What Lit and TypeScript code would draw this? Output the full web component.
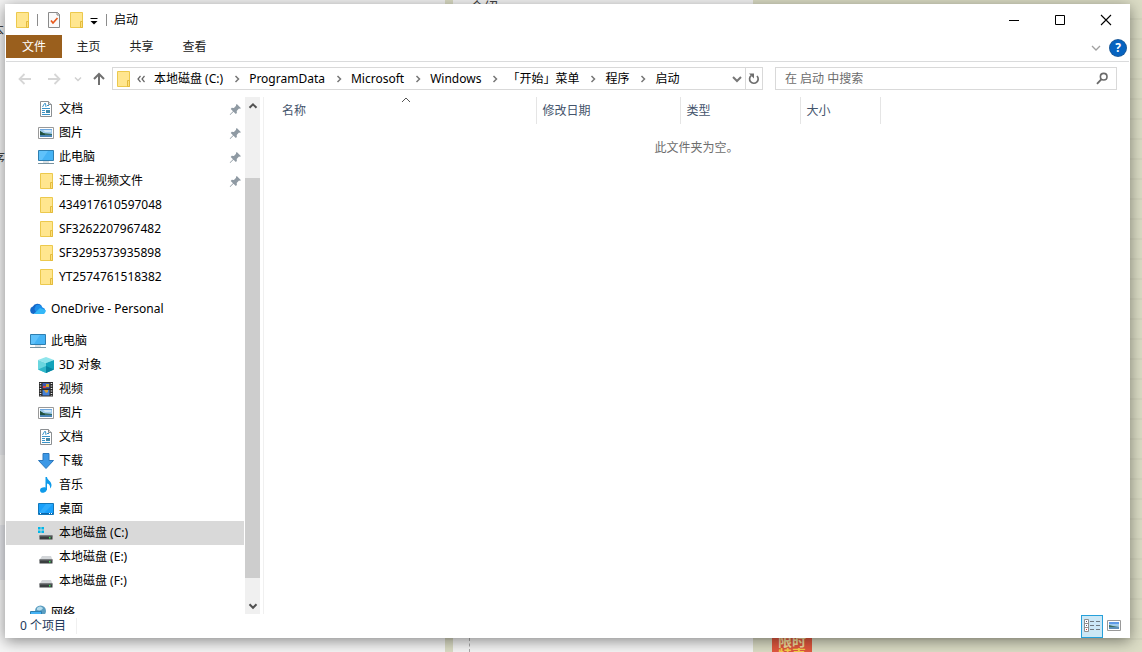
import { LitElement, html, svg, css, nothing } from "lit";
import { customElement, property, state } from "lit/decorators.js";
import { classMap } from "lit/directives/class-map.js";

type NavItem = { id: string; label: string; icon: string; pinned?: boolean; root?: boolean };

const NAV_GROUPS: NavItem[][] = [
  [
    { id: "q-docs", label: "文档", icon: "doc", pinned: true },
    { id: "q-pics", label: "图片", icon: "picture", pinned: true },
    { id: "q-pc", label: "此电脑", icon: "pc", pinned: true },
    { id: "q-hbs", label: "汇博士视频文件", icon: "folder", pinned: true },
    { id: "q-1", label: "434917610597048", icon: "folder" },
    { id: "q-2", label: "SF3262207967482", icon: "folder" },
    { id: "q-3", label: "SF3295373935898", icon: "folder" },
    { id: "q-4", label: "YT2574761518382", icon: "folder" },
  ],
  [{ id: "onedrive", label: "OneDrive - Personal", icon: "cloud", root: true }],
  [
    { id: "pc", label: "此电脑", icon: "pc", root: true },
    { id: "3d", label: "3D 对象", icon: "cube" },
    { id: "video", label: "视频", icon: "film" },
    { id: "pics", label: "图片", icon: "picture" },
    { id: "docs", label: "文档", icon: "doc" },
    { id: "down", label: "下载", icon: "download" },
    { id: "music", label: "音乐", icon: "music" },
    { id: "desk", label: "桌面", icon: "desktop" },
    { id: "c", label: "本地磁盘 (C:)", icon: "windrive" },
    { id: "e", label: "本地磁盘 (E:)", icon: "drive" },
    { id: "f", label: "本地磁盘 (F:)", icon: "drive" },
  ],
  [{ id: "net", label: "网络", icon: "network", root: true }],
];

const CRUMBS = ["本地磁盘 (C:)", "ProgramData", "Microsoft", "Windows", "「开始」菜单", "程序", "启动"];

const driveBody = svg`
  <path d="M4 7h9l1.500 4h-13z" fill="#d3d6d9"/>
  <path d="M1.500 10.500h13v4h-13z" fill="#3b3e40"/>
  <path d="M1.500 10.500h13v1h-13z" fill="#6b6e70"/>
  <path d="M11 12h1.500v1.500H11z" fill="#3fe05a"/>`;

const ICONS: Record<string, unknown> = {
  folder: svg`
    <path d="M2.500.5h12v15h-12z" fill="#ffe68f" stroke="#ecc94d"/>
    <path d="M12.500 9.500h2v6h-2z" fill="#ffe07a" stroke="#e3bb3d"/>`,
  doc: svg`
    <path d="M2.500.5h8l3 3v12h-11z" fill="#fff" stroke="#8b8f92"/>
    <path d="M10.500.5v3h3" fill="#dcdfe0" stroke="#8b8f92"/>
    <path d="M4.500 6l2-3.500h1L8 6M9 4.500h2M4 7.500h8M4 9.500h3M4 11.500h3M4 13.500h8" fill="none" stroke="#3a94c9"/>
    <path d="M8 9h4v3H8z" fill="#4389a9"/>`,
  picture: svg`
    <path d="M.5 2.500h15v11H.5z" fill="#fff" stroke="#999"/>
    <path d="M2 4h12v8H2z" fill="#9fcbed"/>
    <path d="M2 4h12v1H2z" fill="#6fa8e0"/>
    <path d="M5 5h8v2H7z" fill="#cfe6f5"/>
    <path d="M2 10h12v2H2z" fill="#4a84b5"/>
    <path d="M2 6l3 2 9 1v1H2z" fill="#3d6e5c"/>
    <path d="M2 6l5 3v1H2z" fill="#20503f"/>`,
  pc: svg`
    <path d="M.5 1.500h15v10H.5z" fill="#45b3f5" stroke="#2f7fb0"/>
    <path d="M1 2h9L4 11H1z" fill="#72ccff" opacity=".6"/>
    <path d="M5 13h6" stroke="#b5c2ca"/>
    <path d="M0 14.500h16" stroke="#76919f"/>`,
  cloud: svg`
    <path d="M3.800 13A3.800 3.800 0 0 1 2.800 5.600 5.200 5.200 0 0 1 11.800 5L8 11z" fill="#1568c9"/>
    <path d="M6 4.200A5 5 0 0 1 12.600 6.600 3.300 3.300 0 0 1 13 13H7L4.400 8z" fill="#1c8eea"/>
    <path d="M3.800 13h8.900A3.200 3.200 0 0 0 15.700 9.200L10 7z" fill="#34b8f8"/>`,
  cube: svg`
    <path d="M8 0l8 3-8 3-8-3z" fill="#8fe5ec"/>
    <path d="M0 3l8 3v10l-8-3.500z" fill="#6ad6df"/>
    <path d="M8 6l8-3v9.500L8 16z" fill="#12a3bb"/>
    <path d="M0 12.500l8-3.500v7z" fill="#2fb6c8"/>
    <path d="M8 9l8 3.500L8 16z" fill="#0786a3"/>`,
  film: svg`
    <path d="M1 1h14v14.500H1z" fill="#2b2b2b"/>
    <path d="M4.500 2h7v5.500h-7z" fill="#3d59b0"/>
    <path d="M4.500 9h7v5.500h-7z" fill="#4581d8"/>
    <path d="M5 5h3v2H5z" fill="#d84545"/><path d="M8 3h3v3H8z" fill="#c9a52b"/>
    <path d="M6 9h4v2l-2 1z" fill="#d8a13a"/>
    <path d="M2.500 2v13M13.500 2v13" stroke="#e8e8e8" stroke-width="1.500" stroke-dasharray="1 1.500"/>`,
  download: svg`<path d="M5 .5h6v7h4.500L8 15.500.5 7.500H5z" fill="#3c98e6" stroke="#2c78bd"/>`,
  music: svg`
    <path d="M7.500 0h1.500c0 3 4.500 4 4.500 8 0 1.500-.6 2.500-1.500 3.500.5-3-.8-4.500-3-5V13H7.500z" fill="#0f9bea"/>
    <path d="M2 13.200C2 11 5 10 7.500 10.500 9.800 11 9 15 5.500 15.800 3.500 16 2 15 2 13.200z" fill="#0f9bea"/>`,
  desktop: svg`
    <path d="M.5 2.500h15v11H.5z" fill="#18a0fb" stroke="#1277b9"/>
    <path d="M8 3h7L6 12H1z" fill="#3db4ff" opacity=".6"/>
    <path d="M1 12.500h14" stroke="#0b65a8"/>
    <path d="M2 12.500h1M11 12.500h1M13 12.500h1" stroke="#fff"/>`,
  drive: driveBody,
  windrive: svg`${driveBody}
    <path d="M0 2h6v6H0z" fill="#d9d9d9"/>
    <path d="M0 2h2.600v2.600H0zM3.400 2H6v2.600H3.400zM0 5.400h2.600V8H0zM3.400 5.400H6V8H3.400z" fill="#00b7ea"/>`,
  network: svg`
    <circle cx="10.500" cy="6" r="5.500" fill="#5b9dc0"/>
    <path d="M7 3c2-2 4-2 6 0-1 2-3 3-6 2z" fill="#b6dcec"/>
    <path d="M.5 6.500h11v7H.5z" fill="#45b3f5" stroke="#2f7fb0"/>`,
  pin: svg`<path d="M9.800 3l4.200 4.200-1.300.6-.7-.2-2.300 2.300.2 2-1.100 1.100-2.300-2.300L3.200 14l-.5-.5 3.300-3.300-2.300-2.300 1.100-1.100 2.100.2 2.200-2.300-.2-.7z" fill="#8f9aa3"/>`,
  check: svg`
    <path d="M2.500.5h9l2 2v13h-11z" fill="#fafafa" stroke="#8a8a8a"/>
    <path d="M11 0v3h3" fill="none" stroke="#8a8a8a"/>
    <path d="M5 8.500l2 2.500 4.500-5" fill="none" stroke="#e8591c" stroke-width="1.700"/>`,
  dropbar: svg`<path d="M4.500 6.500h7" stroke="#000"/><path d="M4.500 9h7L8 12.500z" fill="#000"/>`,
  back: svg`<path d="M14 8H3M7.500 3L2.500 8l5 5" fill="none" stroke="#d6d6d6" stroke-width="1.800"/>`,
  forward: svg`<path d="M2 8h11M8.500 3l5 5-5 5" fill="none" stroke="#d6d6d6" stroke-width="1.800"/>`,
  recent: svg`<path d="M5 6.500l3 3 3-3" fill="none" stroke="#d0d0d0" stroke-width="1.500"/>`,
  up: svg`<path d="M8 14V3M3 8l5-5 5 5" fill="none" stroke="#707070" stroke-width="2"/>`,
  crumb: svg`<path d="M6.500 5l3 3-3 3" fill="none" stroke="#777" stroke-width="1.500"/>`,
  laquo: svg`<path d="M7.500 5L5 8l2.500 3M11.500 5L9 8l2.500 3" fill="none" stroke="#666" stroke-width="1.200"/>`,
  down: svg`<path d="M4 6l4 4 4-4" fill="none" stroke="#777" stroke-width="2"/>`,
  refresh: svg`<path d="M5.200 4.600A4.300 4.300 0 1 0 11 5" fill="none" stroke="#6e6e6e" stroke-width="1.700"/><path d="M3 2.500h5v5z" fill="#6e6e6e"/>`,
  search: svg`<circle cx="9.700" cy="5.700" r="3.300" fill="none" stroke="#6a6a6a" stroke-width="1.600"/><path d="M7.500 8.200L3 12.800" stroke="#6a6a6a" stroke-width="1.900"/>`,
  expand: svg`<path d="M4 6l4 4 4-4" fill="none" stroke="#a0a0a0" stroke-width="1.300"/>`,
  sort: svg`<path d="M4 10l4-4 4 4" fill="none" stroke="#555"/>`,
  scrollup: svg`<path d="M4.500 9.800L8 6.300l3.500 3.500" fill="none" stroke="#505050" stroke-width="2"/>`,
  scrolldown: svg`<path d="M4.500 6.300L8 9.800l3.500-3.500" fill="none" stroke="#505050" stroke-width="2"/>`,
  min: svg`<path d="M3 8.500h10" stroke="#000"/>`,
  max: svg`<path d="M3.500 3.500h9v9h-9z" fill="none" stroke="#000"/>`,
  close: svg`<path d="M3 3l10 10M13 3L3 13" stroke="#000" stroke-width="1.100"/>`,
  details: svg`
    <path d="M.5 1.500h4v12h-4zM.5 5.500h4M.5 9.500h4" fill="#fff" stroke="#8f8f8f"/>
    <path d="M2 3h1v1H2zM2 7h1v1H2z" fill="#557"/><path d="M2 11h1v1H2z" fill="#c33"/>
    <path d="M6 3.500h4M12 3.500h4M6 7.500h4M12 7.500h4M6 11.500h4M12 11.500h4" stroke="#707a80"/>`,
  large: svg`
    <path d="M1.500 2.500h13v10h-13z" fill="#fff" stroke="#999"/>
    <path d="M3 4h10v7H3z" fill="#9fcbed"/>
    <path d="M3 4h10v2H3z" fill="#5f9be8"/>
    <path d="M3 9h10v2H3z" fill="#5d8fb8"/>
    <path d="M3 7l4 1 6 1H3z" fill="#3d6e5c"/>`,
};

@customElement("x-icon")
class XIcon extends LitElement {
  @property() name = "";
  static styles = css`
    :host { display: block; flex: none; width: 16px; height: 16px; }
    svg { display: block; width: 16px; height: 16px; }
  `;
  render() {
    return html`<svg viewBox="0 0 16 16" aria-hidden="true">${ICONS[this.name]}</svg>`;
  }
}

@customElement("app-root")
class AppRoot extends LitElement {
  @state() private selected = "c";
  @state() private view = "details";

  static styles = css`
    :host {
      display: grid;
      height: 100vh;
      overflow: hidden;
      font: 12px/16px "Noto Sans", "Noto Sans CJK SC", sans-serif;
      color: #000;
    }
    * { box-sizing: border-box; }
    button, input { font: inherit; color: inherit; border: 0; margin: 0; padding: 0; background: none; border-radius: 0; }
    a { color: inherit; text-decoration: none; }
    ul, ol { list-style: none; margin: 0; padding: 0; }

    .backdrop {
      grid-area: 1 / 1;
      display: grid;
      grid-template-columns: 445px 300px 1fr;
      column-gap: 8px;
      min-height: 0;
      overflow: hidden;
      background: repeating-linear-gradient(#dcddc6 0 18px, #d5d6bf 18px 20px), #dcddc6;
    }
    .page { position: relative; background: #f6f6f6; color: #444; font-size: 14px; line-height: 18px; overflow: hidden; }
    .page.left { background: linear-gradient(#f4f4f4 370px, #e8e9ec 370px 455px, #f4f4f4 455px 525px, #e6e7ec 525px 580px, #f6f6f6 580px); }
    .frag { position: absolute; white-space: nowrap; }
    .frag.one { left: -10px; top: 21px; }
    .frag.two { left: -9px; top: 149px; }
    .frag.three { left: 17px; top: -2px; }
    .guide { position: absolute; left: 16px; bottom: 0; height: 14px; border-left: 1px dashed #aaa; }
    .side { position: relative; }
    .badge {
      position: absolute; left: 11px; bottom: -10px; width: 40px;
      display: grid; grid-auto-rows: 14px; justify-items: center;
      background: #e2583f; color: #f3dfa0;
      font-size: 14px; line-height: 14px; font-weight: 700;
    }
    .badge .gold { color: #f8cf4a; }

    .window {
      grid-area: 1 / 1;
      z-index: 1;
      margin: 4px 12px 14px 5px;
      padding: 0 1px;
      min-height: 0;
      display: flex;
      flex-direction: column;
      background: #fff;
      box-shadow: 0 3px 14px rgba(0, 0, 0, 0.45);
    }

    .titlebar { display: flex; align-items: center; height: 31px; flex: none; padding-left: 8px; }
    .titlebar h1 { font: inherit; margin: 0 0 0 7px; flex: 1; }
    .rule { width: 1px; height: 12px; background: #8c8c8c; }
    .quick { display: flex; align-items: center; gap: 6px; margin-left: 7px; }
    .quick .rule { margin-right: 2px; }
    .quick .drop { margin: 0 4px 0 -4px; }
    .caption { display: flex; align-self: stretch; }
    .caption button { width: 46px; display: grid; place-items: center; }

    .ribbon { display: flex; align-items: center; height: 27px; flex: none; border-bottom: 1px solid #dadbdc; padding-right: 3px; }
    .ribbon .tabs { display: flex; flex: 1; align-self: flex-start; }
    .ribbon .tabs button { width: 53px; height: 23px; padding-top: 1px; color: #222; }
    .ribbon .tabs .file { width: 56px; background: #9a5f1d; color: #fff; }
    .help { width: 16px; height: 16px; border-radius: 8px; background: #0663c0; color: #fff; font-weight: 700; margin-left: 6px; box-shadow: 0 0 0 1px #1b5a9a; }

    .toolbar { display: flex; align-items: center; height: 35px; flex: none; padding: 0 12px 2px 0; }
    .history { display: flex; align-items: center; width: 106px; padding-left: 11px; }
    .history .fwd { margin-left: 13px; }
    .history .recent { margin-left: 8px; }
    .history .up { margin-left: 5px; }
    .address { flex: 1; display: flex; align-items: center; height: 23px; border: 1px solid #d9d9d9; padding-left: 2px; min-width: 0; }
    .crumbs { display: flex; align-items: center; flex: 1; white-space: nowrap; min-width: 0; overflow: hidden; }
    .crumbs li { display: flex; align-items: center; }
    .crumbs .arrow { margin: 0 4px 0 6px; }
    .crumbs li:first-child .arrow { margin: 0 5px 0 2px; }
    .refresh { height: 21px; width: 17px; border-left: 1px solid #d9d9d9; display: grid; place-items: center; }
    .searchbox { display: flex; align-items: center; width: 342px; height: 23px; margin-left: 12px; border: 1px solid #d9d9d9; padding: 0 6px 0 9px; }
    .searchbox input { flex: 1; min-width: 0; outline: 0; }
    .searchbox input::placeholder { color: #6d6d6d; opacity: 1; }

    .body { flex: 1; display: flex; min-height: 0; }
    .nav { width: 238px; flex: none; overflow: hidden; }
    .nav ul { margin-bottom: 8px; }
    .nav a { display: flex; align-items: center; height: 24px; gap: 5px; padding: 0 1px 0 32px; white-space: nowrap; }
    .nav a.root { padding-left: 24px; }
    .nav a.on { background: #d9d9d9; }
    .nav .label { flex: 1; }
    .scroll { width: 17px; flex: none; display: flex; flex-direction: column; align-items: center; background: #f0f0f0; margin-right: 2px; border-left: 1px solid #fff; border-right: 1px solid #fff; }
    .scroll button { height: 17px; }
    .track { flex: 1; align-self: stretch; display: grid; grid-template-rows: 64fr 400fr 19fr; }
    .thumb { grid-row: 2; background: #cdcdcd; }

    .list { flex: 1; border-left: 1px solid #f0f0f0; min-width: 0; position: relative; }
    table { border-collapse: collapse; table-layout: fixed; width: 616px; color: #44546c; }
    th { height: 27px; padding: 0 0 0 6px; font-weight: 400; text-align: left; border-right: 1px solid #e5e5e5; }
    th.name { width: 272px; padding-left: 18px; }
    th.date { width: 144px; }
    th.type { width: 120px; }
    th.size { width: 80px; }
    .sort { position: absolute; left: 134px; top: -5px; }
    .empty { margin: 16px 0 0; text-align: center; color: #6d6d6d; }

    .status { display: flex; align-items: center; height: 24px; flex: none; padding: 0 4px 0 14px; color: #1e395b; }
    .status .count { padding-right: 10px; border-right: 1px solid #f0f0f0; margin-right: auto; }
    .status button { width: 22px; height: 23px; display: grid; place-items: center; border: 1px solid transparent; }
    .status button.on { background: #cce8f6; border-color: #26a0da; }
  `;

  private renderItem(item: NavItem) {
    return html`<li>
      <a href="#${item.id}" class=${classMap({ root: !!item.root, on: this.selected === item.id })}
        @click=${(e: Event) => { e.preventDefault(); this.selected = item.id; }}>
        <x-icon name=${item.icon}></x-icon><span class="label">${item.label}</span>
        ${item.pinned ? html`<x-icon name="pin"></x-icon>` : nothing}
      </a>
    </li>`;
  }

  render() {
    return html`
      <div class="backdrop" aria-hidden="true">
        <div class="page left"><span class="frag one">本</span><span class="frag two">序</span></div>
        <div class="page"><span class="frag three">介绍</span><i class="guide"></i></div>
        <div class="side"><div class="badge"><span>限时</span><span class="gold">特惠</span></div></div>
      </div>
      <main class="window">
        <header class="titlebar">
          <x-icon name="folder"></x-icon>
          <div class="quick">
            <i class="rule"></i>
            <button aria-label="属性"><x-icon name="check"></x-icon></button>
            <button aria-label="新建文件夹"><x-icon name="folder"></x-icon></button>
            <button class="drop" aria-label="自定义快速访问工具栏"><x-icon name="dropbar"></x-icon></button>
          </div>
          <i class="rule"></i>
          <h1>启动</h1>
          <div class="caption">
            <button aria-label="最小化"><x-icon name="min"></x-icon></button>
            <button aria-label="最大化"><x-icon name="max"></x-icon></button>
            <button aria-label="关闭"><x-icon name="close"></x-icon></button>
          </div>
        </header>
        <div class="ribbon">
          <div class="tabs">
            <button class="file">文件</button><button>主页</button><button>共享</button><button>查看</button>
          </div>
          <button aria-label="展开功能区"><x-icon name="expand"></x-icon></button>
          <button class="help" aria-label="帮助">?</button>
        </div>
        <div class="toolbar">
          <div class="history">
            <button aria-label="后退"><x-icon name="back"></x-icon></button>
            <button class="fwd" aria-label="前进"><x-icon name="forward"></x-icon></button>
            <button class="recent" aria-label="最近位置"><x-icon name="recent"></x-icon></button>
            <button class="up" aria-label="上移"><x-icon name="up"></x-icon></button>
          </div>
          <div class="address">
            <x-icon name="folder"></x-icon>
            <ol class="crumbs">
              ${CRUMBS.map((c, i) => html`<li>
                <x-icon class="arrow" name=${i ? "crumb" : "laquo"}></x-icon><a href="#">${c}</a>
              </li>`)}
            </ol>
            <button aria-label="以前的位置"><x-icon name="down"></x-icon></button>
            <button class="refresh" aria-label="刷新"><x-icon name="refresh"></x-icon></button>
          </div>
          <label class="searchbox">
            <input type="text" aria-label="搜索" placeholder="在 启动 中搜索" />
            <x-icon name="search"></x-icon>
          </label>
        </div>
        <div class="body">
          <nav class="nav">${NAV_GROUPS.map((g) => html`<ul>${g.map((i) => this.renderItem(i))}</ul>`)}</nav>
          <div class="scroll">
            <button aria-label="向上滚动"><x-icon name="scrollup"></x-icon></button>
            <div class="track"><div class="thumb"></div></div>
            <button aria-label="向下滚动"><x-icon name="scrolldown"></x-icon></button>
          </div>
          <section class="list">
            <x-icon class="sort" name="sort"></x-icon>
            <table>
              <thead><tr>
                <th class="name">名称</th><th class="date">修改日期</th><th class="type">类型</th><th class="size">大小</th>
              </tr></thead>
            </table>
            <p class="empty">此文件夹为空。</p>
          </section>
        </div>
        <footer class="status">
          <span class="count">0 个项目</span>
          <button class=${classMap({ on: this.view === "details" })} aria-label="详细信息" @click=${() => (this.view = "details")}><x-icon name="details"></x-icon></button>
          <button class=${classMap({ on: this.view === "large" })} aria-label="大图标" @click=${() => (this.view = "large")}><x-icon name="large"></x-icon></button>
        </footer>
      </main>
    `;
  }
}
